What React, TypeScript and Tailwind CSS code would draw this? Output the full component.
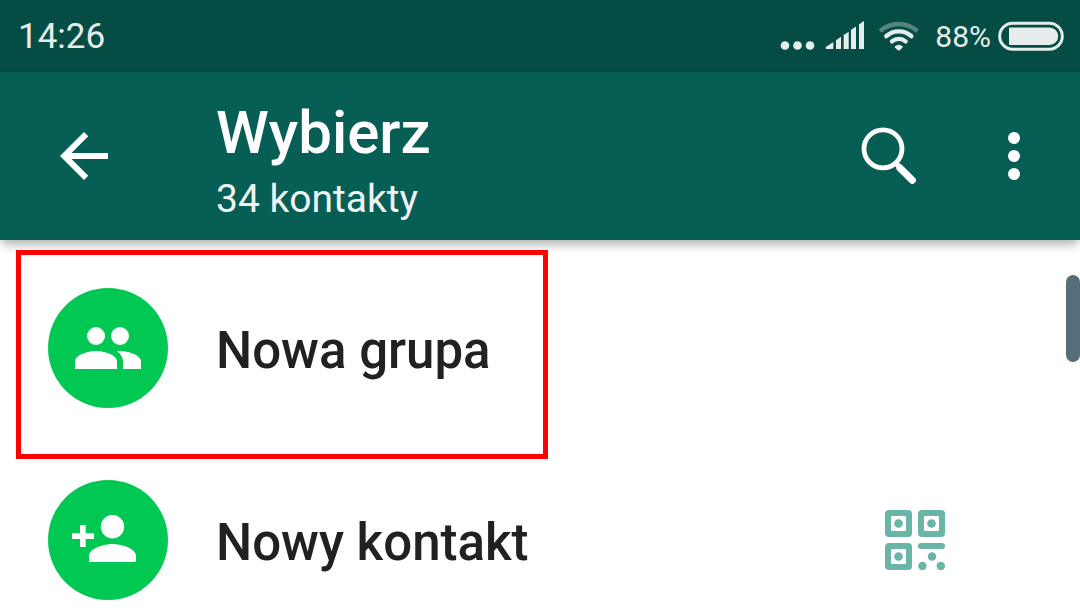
import type { ReactNode } from "react";

function SignalIcon() {
  return (
    <svg width="84" height="30" viewBox="780 21 84 30" fill="currentColor" aria-hidden="true">
      <circle cx="785" cy="45.5" r="4.3" />
      <circle cx="797.5" cy="45.5" r="4.3" />
      <circle cx="810" cy="45.5" r="4.3" />
      <path d="M833.3 42v7h-6.6c-1.3 0-1.5-1.6-.5-2.3z" />
      <path d="M836 40.2l5-3.4V49h-5z" />
      <path d="M843.7 35l5-3.3V49h-5z" />
      <path d="M851 29.8l5-3.4V49h-5z" />
      <path d="M859 24.4l4-3c.6-.4 1 0 1 .6V49h-5z" />
    </svg>
  );
}

function WifiIcon() {
  return (
    <svg width="40" height="30" viewBox="879 21 40 30" fill="none" stroke="currentColor" strokeWidth="4.4" aria-hidden="true">
      <path d="M880.2 31a28 28 0 0 1 37.2 0" opacity="0.35" />
      <path d="M886.3 36.2a18.5 18.5 0 0 1 25 0" strokeLinecap="round" />
      <path d="M892 41.4a10.5 10.5 0 0 1 13.6 0" strokeLinecap="round" />
      <path d="M895 46.3q3.8-3.200 7.600 0q.6.700 0 1.300l-2.800 2.600q-1 .8-2 0l-2.800-2.600q-.6-.6 0-1.300z" fill="currentColor" stroke="none" />
    </svg>
  );
}

function BatteryIcon() {
  return (
    <svg width="66" height="30" viewBox="0 0 66 30" aria-hidden="true">
      <rect x="1.7" y="2.2" width="62.6" height="26" rx="13" fill="none" stroke="currentColor" strokeWidth="3" />
      <path d="M12 6.5h39.5a8.7 8.7 0 0 1 0 17.4H12q-1 0-1-1V7.5q0-1 1-1z" fill="currentColor" />
    </svg>
  );
}

function QrIcon() {
  return (
    <svg width="60" height="60" viewBox="0 0 60 60" fill="currentColor" aria-hidden="true">
      {[[0, 0], [33, 0], [0, 33]].map(([x, y]) => (
        <g key={`${x}-${y}`} transform={`translate(${x} ${y})`}>
          <rect width="27" height="27" rx="4" />
          <rect x="6" y="6" width="15" height="15" rx="1.2" fill="#fff" />
          <circle cx="13.5" cy="13.5" r="4.3" />
        </g>
      ))}
      <rect x="33" y="33" width="27" height="6" rx="3" />
      <circle cx="47" cy="46.5" r="4.2" />
      <circle cx="37.4" cy="56" r="4.2" />
      <circle cx="55.8" cy="56" r="4.2" />
    </svg>
  );
}

function GroupIcon() {
  return (
    <svg width="72" height="72" viewBox="0 0 24 24" fill="currentColor" aria-hidden="true">
      <circle cx="8" cy="8" r="3" />
      <circle cx="16" cy="8" r="3" />
      <path d="M8 13c-2.33 0-7 1.17-7 3.5V19h14v-2.5c0-2.33-4.67-3.5-7-3.5z" />
      <path d="M16 13c-.29 0-.62.02-.97.05 1.16.84 1.97 1.97 1.97 3.45V19h6v-2.5c0-2.33-4.67-3.5-7-3.5z" />
    </svg>
  );
}

function AddPersonIcon() {
  return (
    <svg width="72" height="72" viewBox="0 0 72 72" fill="currentColor" aria-hidden="true">
      <circle cx="40.5" cy="22.7" r="11.7" />
      <path d="M17 58v-6c0-8 15.6-12 23.5-12S64 44 64 52v6z" />
      <path d="M8 21h5.7v8.3H22V35h-8.300v8H8v-8H0v-5.700h8z" />
    </svg>
  );
}

type RowProps = { icon: ReactNode; label: string; highlighted?: boolean; action?: ReactNode };

function Row({ icon, label, highlighted, action }: RowProps) {
  return (
    <li className="relative flex h-48 items-center">
      <button type="button" className="flex h-full flex-1 items-center gap-12 pl-12 text-left">
        <span className="flex size-[120px] shrink-0 items-center justify-center rounded-full bg-[#00c853] text-white">
          {icon}
        </span>
        <span className="pt-1.5 text-[51px] leading-[60px] font-medium whitespace-nowrap text-[#212121]">{label}</span>
      </button>
      {action}
      {highlighted && (
        <span className="pointer-events-none absolute -top-0.5 left-4 z-20 h-[209px] w-[532px] border-5 border-[#ff0000]" />
      )}
    </li>
  );
}

export default function App() {
  return (
    <div className="relative h-screen overflow-hidden bg-white font-[Roboto,sans-serif]">
      <div className="flex h-[72px] items-center justify-between bg-[#054d44] pr-4 pl-[18px] text-[#e6edec]">
        <time className="pt-0.5 text-[35px] leading-[48px]">14:26</time>
        <div className="flex items-center">
          <SignalIcon />
          <span className="ml-[15px]"><WifiIcon /></span>
          <span className="mr-[7px] ml-4 pt-0.5 text-[30px] leading-[48px]">88%</span>
          <BatteryIcon />
        </div>
      </div>

      <header className="relative z-10 flex h-[168px] items-center bg-[#075e54] pr-[30px] pl-12 text-white shadow-[0_6px_10px_-2px_rgba(0,0,0,0.33)]">
        <button type="button" aria-label="Wstecz">
          <svg width="72" height="72" viewBox="0 0 24 24" fill="currentColor">
            <path d="M20 11H7.83l5.59-5.59L12 4l-8 8 8 8 1.41-1.41L7.83 13H20v-2z" />
          </svg>
        </button>
        <div className="ml-24 flex-1 pt-3.5">
          <h1 className="text-[60px] leading-[72px] font-medium">Wybierz</h1>
          <p className="text-[39px] leading-[60px] text-[#eef3f3]">34 kontakty</p>
        </div>
        <div className="flex gap-[54px]">
          <button type="button" aria-label="Szukaj">
            <svg width="72" height="72" viewBox="0 0 72 72" fill="none" stroke="currentColor">
              <circle cx="31" cy="28.8" r="19" strokeWidth="4.8" />
              <path d="M43 43l5 4" strokeWidth="5" />
              <path d="M48 48l12.3 12.3" strokeWidth="7.2" strokeLinecap="round" />
            </svg>
          </button>
          <button type="button" aria-label="Więcej">
            <svg width="72" height="72" viewBox="0 0 24 24" fill="currentColor">
              <circle cx="12" cy="6" r="2" />
              <circle cx="12" cy="12" r="2" />
              <circle cx="12" cy="18" r="2" />
            </svg>
          </button>
        </div>
      </header>

      <main className="relative">
        <ul className="pt-3">
          <Row icon={<GroupIcon />} label="Nowa grupa" highlighted />
          <Row
            icon={<AddPersonIcon />}
            label="Nowy kontakt"
            action={
              <button type="button" aria-label="Kod QR" className="mr-[135px] text-[#69b5a8]">
                <QrIcon />
              </button>
            }
          />
        </ul>
        <div className="absolute top-[35px] right-0 h-[87px] w-3.5 rounded-full bg-[#546e7a]" />
      </main>
    </div>
  );
}
